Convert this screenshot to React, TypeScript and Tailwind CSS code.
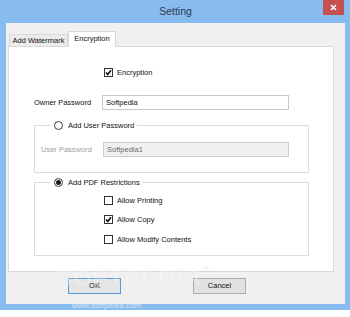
import React from "react";

const Check = ({ checked }: { checked?: boolean }) => (
  <span className="w-[9px] h-[9px] border border-[#333333] bg-white flex items-center justify-center shrink-0">
    {checked && (
      <svg width="7" height="7" viewBox="0 0 7 7">
        <path d="M1 3.5 L2.8 5.4 L6 1.2" fill="none" stroke="#111111" strokeWidth="1.6" />
      </svg>
    )}
  </span>
);

const Radio = ({ checked }: { checked?: boolean }) => (
  <span className="w-[9px] h-[9px] rounded-full border border-[#3c3c3c] bg-white flex items-center justify-center shrink-0">
    {checked && <span className="w-[5px] h-[5px] rounded-full bg-[#1a1a1a]" />}
  </span>
);

export default function App() {
  return (
    <div className="w-[350px] h-[317px] bg-white relative overflow-hidden font-['Liberation_Sans',Arial,sans-serif] text-[7.5px] text-[#111111] leading-none">
      <div className="h-[310px] bg-[#88bbef] flex flex-col pl-[6px] pr-[5px] pb-[6px]">
        <div className="h-[23px] relative flex items-center justify-center">
          <span className="text-[10.5px] text-[#2e3a4a] pb-[1px]">Setting</span>
          <div className="absolute right-[1px] top-0 w-[21px] h-[15px] bg-[#c75050] flex items-center justify-center">
            <svg width="7" height="7" viewBox="0 0 7 7">
              <path d="M1 1 L6 6 M6 1 L1 6" stroke="#ffffff" strokeWidth="1.6" />
            </svg>
          </div>
        </div>
        <div className="flex-1 bg-[#f0f0f0] flex flex-col">
          <div className="pl-[2px] pt-[8px] pr-[11px]">
            <div className="h-[15px] flex items-end pl-[1px] relative z-10">
              <div className="h-[12px] w-[59px] border border-b-0 border-[#d9d9d9] bg-[#ececec] flex items-center justify-center pt-[1px]">
                Add Watermark
              </div>
              <div className="h-[16px] w-[48px] -mb-px border border-b-0 border-[#d9d9d9] bg-white flex items-center justify-center pb-[2px]">
                Encryption
              </div>
            </div>
            <div className="h-[226px] border border-[#d9d9d9] bg-white flex flex-col">
              <div className="mt-[19px] h-[13px] flex items-center pl-[95px] gap-[4px]">
                <Check checked />
                <span>Encryption</span>
              </div>
              <div className="mt-[16px] h-[15px] flex items-center pl-[25px]">
                <span className="w-[68px]">Owner Password</span>
                <div className="w-[187px] h-[15px] border border-[#c8c8c8] bg-white flex items-center pl-[3px]">
                  Softpedia
                </div>
              </div>
              <fieldset className="mt-[9px] ml-[25px] w-[275px] border border-[#dcdcdc] pb-[15px]">
                <legend className="ml-[16px] px-[3px]">
                  <span className="h-[13px] flex items-center gap-[5px]">
                    <Radio />
                    <span>Add User Password</span>
                  </span>
                </legend>
                <div className="mt-[10px] h-[15px] flex items-center pl-[6px]">
                  <span className="w-[62px] text-[#a0a0a0]">User Password</span>
                  <div className="w-[186px] h-[15px] border border-[#cccccc] bg-[#f0f0f0] flex items-center pl-[3px] text-[#6d6d6d]">
                    Softpedia1
                  </div>
                </div>
              </fieldset>
              <fieldset className="mt-[3px] ml-[25px] w-[275px] border border-[#dcdcdc] pb-[9px]">
                <legend className="ml-[16px] px-[3px]">
                  <span className="h-[13px] flex items-center gap-[5px]">
                    <Radio checked />
                    <span>Add PDF Restrictions</span>
                  </span>
                </legend>
                <div className="mt-[5px] h-[13px] flex items-center pl-[69px] gap-[4px]">
                  <Check />
                  <span>Allow Printing</span>
                </div>
                <div className="mt-[6px] h-[13px] flex items-center pl-[69px] gap-[4px]">
                  <Check checked />
                  <span>Allow Copy</span>
                </div>
                <div className="mt-[7px] h-[13px] flex items-center pl-[69px] gap-[4px]">
                  <Check />
                  <span>Allow Modify Contents</span>
                </div>
              </fieldset>
            </div>
          </div>
          <div className="mt-[6px] flex pl-[62px] gap-[72px]">
            <div className="w-[53px] h-[16px] border border-[#5b9bd8] bg-[#e5e5e5] flex items-center justify-center">
              OK
            </div>
            <div className="w-[53px] h-[16px] border border-[#acacac] bg-[#e1e1e1] flex items-center justify-center">
              Cancel
            </div>
          </div>
        </div>
      </div>
      <div className="absolute left-[56px] top-[266px] text-[24px] font-bold tracking-[1px] text-white/30 pointer-events-none [-webkit-text-stroke:0.5px_rgba(200,200,200,0.25)]">
        SOFTPEDIA<span className="text-[7px] align-top">™</span>
      </div>
      <div className="absolute left-[72px] top-[302px] text-[8px] text-[#d8e6f5] pointer-events-none">
        www.softpedia.com
      </div>
    </div>
  );
}
